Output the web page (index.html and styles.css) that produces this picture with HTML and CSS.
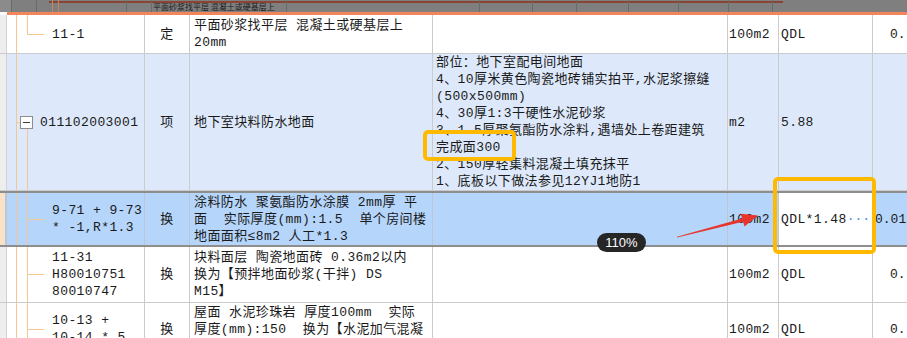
FILE: index.html
```html
<!DOCTYPE html>
<html lang="zh-CN">
<head>
    <meta charset="UTF-8">
    <meta name="viewport" content="width=device-width, initial-scale=1.0">
    <title>清单定额</title>
    <link rel="stylesheet" href="styles.css">
</head>
<body>

<div class="sheet">

    <!-- drag preview of the row being moved -->
    <div class="ghost">
        <span class="g g0"></span>
        <span class="g g1"></span>
        <span class="g g2"></span>
        <span class="g g3"></span>
        <span class="g g4"></span>
        <span class="g g5"></span>
        <span class="g g6">平面砂浆找平层 混凝土或硬基层上</span>
        <span class="g g7"></span>
        <span class="g g8"></span>
        <span class="g g9"></span>
        <span class="g g10"></span>
        <span class="g g11"></span>
        <span class="g g12"></span>
        <span class="g g13"></span>
        <span class="g g14"></span>
    </div>
    <div class="accent"></div>

    <div class="row row-top">
        <div class="cell gutter"></div>
        <div class="cell tree tree-end">11-1</div>
        <div class="cell kind">定</div>
        <div class="cell desc"><p>平面砂浆找平层 混凝土或硬基层上<br>20mm</p></div>
        <div class="cell feat"></div>
        <div class="cell unit">100m2</div>
        <div class="cell expr">QDL</div>
        <div class="cell qty">0.</div>
    </div>

    <div class="row row-group">
        <div class="cell gutter"></div>
        <div class="cell tree tree-head"><span class="toggle"></span>011102003001</div>
        <div class="cell kind">项</div>
        <div class="cell desc">地下室块料防水地面</div>
        <div class="cell feat"><p>部位：地下室配电间地面<br>4、10厚米黄色陶瓷地砖铺实拍平,水泥浆擦缝<br>(500x500mm)<br>4、30厚1:3干硬性水泥砂浆<br>3、1.5厚聚氨酯防水涂料,遇墙处上卷距建筑<br>完成面300<br>2、150厚轻集料混凝土填充抹平<br>1、底板以下做法参见12YJ1地防1</p></div>
        <div class="cell unit">m2</div>
        <div class="cell expr">5.88</div>
        <div class="cell qty"></div>
    </div>

    <div class="row row-sub sel">
        <div class="cell gutter"></div>
        <div class="cell tree"><p>9-71 + 9-73<br>* -1,R*1.3</p></div>
        <div class="cell kind">换</div>
        <div class="cell desc"><p>涂料防水 聚氨酯防水涂膜 2mm厚 平<br>面&nbsp;&nbsp;实际厚度(mm):1.5&nbsp;&nbsp;单个房间楼<br>地面面积≤8m2 人工*1.3</p></div>
        <div class="cell feat"></div>
        <div class="cell unit">100m2</div>
        <div class="cell expr"><span>QDL*1.48</span><span class="more">···</span></div>
        <div class="cell qty">0.01</div>
    </div>

    <div class="row row-sub">
        <div class="cell gutter"></div>
        <div class="cell tree"><p>11-31<br>H80010751<br>80010747</p></div>
        <div class="cell kind">换</div>
        <div class="cell desc"><p>块料面层 陶瓷地面砖 0.36m2以内<br>换为【预拌地面砂浆(干拌) DS<br>M15】</p></div>
        <div class="cell feat"></div>
        <div class="cell unit">100m2</div>
        <div class="cell expr">QDL</div>
        <div class="cell qty">0.</div>
    </div>

    <div class="row row-last">
        <div class="cell gutter"></div>
        <div class="cell tree"><p>10-13 +<br>10-14 * 5</p></div>
        <div class="cell kind">换</div>
        <div class="cell desc"><p>屋面 水泥珍珠岩 厚度100mm&nbsp;&nbsp;实际<br>厚度(mm):150&nbsp;&nbsp;换为【水泥加气混凝<br>土】</p></div>
        <div class="cell feat"></div>
        <div class="cell unit">100m2</div>
        <div class="cell expr">QDL</div>
        <div class="cell qty">0.</div>
    </div>

    <!-- annotations drawn over the grid -->
    <div class="mark mark-feature"></div>
    <div class="mark mark-expr"></div>
    <svg class="arrow" width="907" height="338" viewBox="0 0 907 338">
        <polygon points="677,237.6 743,221.8 744.5,226.5 758,215.6 740.6,213.8 742.2,218.4 677,236.8" fill="#e8342a"/>
    </svg>
    <div class="zoom-badge">110%</div>

</div>

</body>
</html>
```

FILE: styles.css
```css
body {
    margin: 0;
    padding: 0;
    background-color: #ffffff;
    overflow: hidden;
}

.sheet {
    position: relative;
    width: 907px;
    height: 338px;
    overflow: hidden;
    font-family: "Liberation Mono", "Noto Sans CJK SC", monospace;
    --tree-line: #f6c690;
}

/* drag ghost strip at the very top */
.ghost {
    display: flex;
    height: 12px;
    background: linear-gradient(#8a4434, #8a4434) 49px 1px / 734px 2px no-repeat #7f7f7f;
    font-family: "Noto Sans CJK SC", sans-serif;
    font-size: 8px;
    line-height: 10px;
    color: #1b1b1b;
    overflow: hidden;
}

.g {
    flex: none;
    box-sizing: border-box;
    height: 12px;
    border-right: 1px solid #6a6a6a;
    overflow: hidden;
    white-space: nowrap;
}

.g0 { width: 12px; background-color: #8b8b8b; }
.g1 { width: 25px; }
.g2 { width: 16px; border-right-color: #c98457; }
.g3 { width: 6px; border-right-color: #c98457; }
.g4 { width: 68px; }
.g5 { width: 25px; }
.g6 { width: 135px; padding: 2px 0 0 1px; }
.g7 { width: 193px; }
.g8 { width: 53px; }
.g9 { width: 44px; }
.g10 { width: 52px; }
.g11 { width: 50px; }
.g12 { width: 50px; }
.g13 { width: 44px; }
.g14 { flex: 1; border-right: 0; }

.accent {
    height: 3px;
    margin-left: 7px;
    background-color: #f2865a;
}

/* grid rows */
.row {
    display: grid;
    grid-template-columns: 7px 138px 45px 243px 295px 51px 94px 1fr;
    box-sizing: border-box;
    border-bottom: 1px solid #cbcbcb;
    background-color: #ffffff;
    font-size: 13px;
    line-height: 17px;
    letter-spacing: 0.4px;
    color: #1a1a1a;
}

.row-top { height: 39px; }
.row-group { height: 137px; background-color: #dde9fb; }
.row-sub { height: 56px; }
.row-last { height: 53px; }

.row.sel {
    background-color: #b5d5fb;
    border-top: 2px solid #8e8e8e;
    border-bottom: 2px solid #8e8e8e;
}

.cell {
    box-sizing: border-box;
    display: flex;
    align-items: center;
    min-width: 0;
    border-right: 1px solid #cbcbcb;
    overflow: hidden;
    white-space: nowrap;
}

.cell p {
    margin: 0;
}

.gutter {
    background-color: #eeeeee;
    border-right-color: #d2d2d2;
}

.sel .gutter {
    background-color: #fbe2c6;
    border-right: 2px solid #4b8ee0;
}

.sel .cell {
    border-right-color: #b9c6d6;
}

/* tree column with connector lines */
.tree {
    padding-left: 45px;
    background-image:
        linear-gradient(var(--tree-line), var(--tree-line)),
        linear-gradient(var(--tree-line), var(--tree-line)),
        linear-gradient(var(--tree-line), var(--tree-line));
    background-size: 1px 100%, 1px 100%, 17px 1px;
    background-position: 9px 0, 20px 0, 20px 50%;
    background-repeat: no-repeat;
}

.tree-end {
    background-size: 1px 100%, 1px 50%, 17px 1px;
}

.tree-head {
    padding-left: 13px;
    background-size: 1px 100%, 1px 50%, 4px 1px;
    background-position: 9px 0, 20px 100%, 9px 50%;
}

.toggle {
    flex: none;
    width: 13px;
    height: 13px;
    box-sizing: border-box;
    margin-right: 7px;
    border: 1px solid #8c8c8c;
    background: linear-gradient(#3a3a3a, #3a3a3a) center / 7px 1px no-repeat #ffffff;
}

.kind {
    justify-content: center;
}

.desc {
    padding-left: 4px;
}

.feat {
    padding-left: 3px;
}

.unit {
    padding-left: 1px;
}

.expr {
    padding-left: 2px;
}

.sel .expr {
    justify-content: space-between;
    padding-right: 6px;
    background-color: #ffffff;
}

.more {
    color: #3d8fe2;
    letter-spacing: 0;
}

.qty {
    padding-left: 17px;
    border-right: 0;
    letter-spacing: 0;
}

.sel .qty {
    padding-left: 2px;
}

/* annotations */
.mark {
    position: absolute;
    box-sizing: border-box;
    border: 4px solid #ffb900;
    border-radius: 5px;
}

.mark-feature {
    left: 423px;
    top: 130px;
    width: 93px;
    height: 31px;
}

.mark-expr {
    left: 773px;
    top: 177px;
    width: 103px;
    height: 77px;
}

.arrow {
    position: absolute;
    left: 0;
    top: 0;
    pointer-events: none;
}

.zoom-badge {
    position: absolute;
    left: 597px;
    top: 233px;
    width: 49px;
    height: 19px;
    border-radius: 10px;
    background-color: #262626;
    color: #ffffff;
    font-family: "Liberation Sans", Arial, sans-serif;
    font-size: 13px;
    line-height: 19px;
    text-align: center;
}
```
